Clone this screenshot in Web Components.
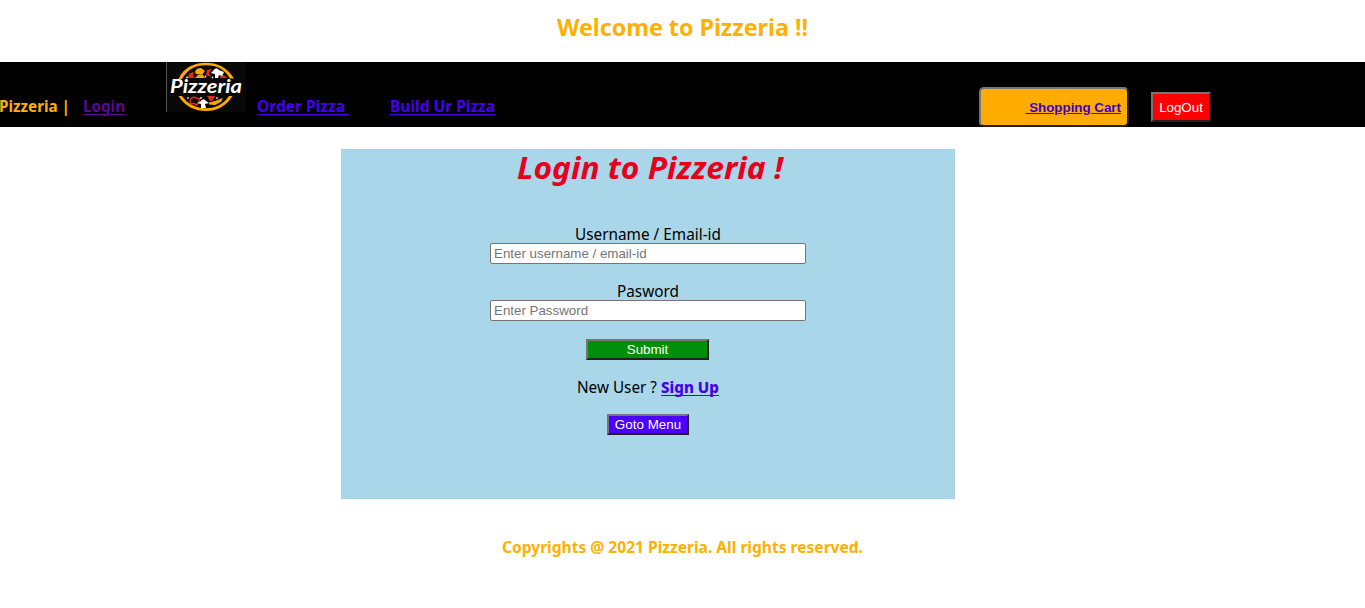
<!DOCTYPE html>
<html lang="en"><head><meta charset="utf-8"><title>Pizzeria</title>
<style>html,body{margin:0;background:#fff;overflow:hidden}body{font-family:"Noto Sans",sans-serif}</style></head>
<body><pizza-app></pizza-app>
<script>
const define=(name,html,ready)=>customElements.define(name,class extends HTMLElement{
  constructor(){super();this.attachShadow({mode:'open'}).innerHTML=html}
  connectedCallback(){if(ready)ready(this)}
});

// Text condensed or expanded to the width given in its "w" attribute.
define('fit-text',`<style>
:host{display:block;flex:none;white-space:pre;font-size:15.5px;line-height:18px}
span{display:inline-block;vertical-align:top;transform-origin:0 0;text-decoration:inherit;text-underline-offset:2px;text-decoration-skip-ink:none}
</style><span><slot></slot></span>`,el=>{
  const w=+el.getAttribute('w'),s=el.shadowRoot.querySelector('span');
  el.style.width=w+'px';
  s.style.transform='scaleX('+w/s.getBoundingClientRect().width+')';
});

define('pizza-logo',`<style>:host{display:block;flex:none;width:80px;height:50px}svg{display:block}</style>
<svg width="80" height="50" viewBox="0 0 80 50">
<rect width="80" height="50" fill="#080808"/><path d="M.5 0V50" stroke="#555"/>
<g fill="#ffa800">
<path d="M12.500 17C18 5 29 .8 40 .8S61 5 68 16.500H64C59 7.500 51 3.200 40 3.200S22 7 16 17z"/>
<path d="M12.500 34C19 44.500 29 49 40 49S60 44.500 66.500 34H63C57 42.500 50 46.200 40 46.200S22 42.500 16 34z"/>
<path d="M29 10q1-4 6-4l4 3-3 4-6-1zM29 16l3-3 5 0 2 3zM49 39l8-3-2 4-6 3-6-.5 0-2z"/></g>
<g fill="#e52b12"><path d="M24 11l4-1-1 4 2 2h-7l0-2zM41 8l5-1-3 4 2 4-5-2zM55 12l4 2 2 2h-7zM41 34h8l-3 5-2 0z"/></g>
<path d="M25 36.500l3-1.500 3 1.500 3 0-1 3-2 3.500-3-1.500-3 .5-1-3z" fill="none" stroke="#e52b12" stroke-width="1.500"/>
<path d="M47 9q3-5 6-1l5 2-2 4-3-1-1 3-3 0 0-4-4-1zM34 40q3-5 6-1l3 2-4 1 1 4-5 0 0-4-4-1z" fill="#fff"/>
<g fill="#ddd"><circle cx="21" cy="15.500" r="1"/><circle cx="39.500" cy="14.500" r="1"/><circle cx="46.500" cy="15.500" r=".9"/><circle cx="35" cy="36" r="1"/><circle cx="22" cy="36" r=".9"/><circle cx="51" cy="36" r=".9"/></g>
<text x="4" y="31" textLength="72" lengthAdjust="spacingAndGlyphs" font-family="Lato,sans-serif" font-size="18" font-weight="700" font-style="italic" fill="#fff">Pizzeria</text>
</svg>`);

define('app-button',`<style>
:host{display:block;flex:none}
button{box-sizing:border-box;display:block;width:100%;height:100%;margin:0;padding:0;border:2px solid;border-color:#767676 #212121 #212121 #767676;border-radius:var(--radius,0);background:var(--bg);color:#fff;font:13.333px/15px "Liberation Sans",Arial,sans-serif;letter-spacing:var(--ls,0);white-space:pre}
</style><button type="button"><slot></slot></button>`);

define('form-field',`<style>
:host{display:flex;flex-direction:column;align-items:center;height:40px}
::slotted(fit-text){padding-top:1px}
input{box-sizing:border-box;width:316px;height:21px;margin:0;padding:1px 3px;border:1px solid #767676;border-radius:2px;background:#fff;font:13.333px "Liberation Sans",Arial,sans-serif}
input::placeholder{color:#757575}
</style><slot></slot><input>`,el=>{
  const i=el.shadowRoot.querySelector('input');i.type=el.getAttribute('type');i.placeholder=el.getAttribute('placeholder');
});

define('site-nav',`<style>
:host{display:flex;align-items:flex-start;height:65px;background:#000;font-weight:700}
.t{margin-top:35px}.brand{color:#ffb000;margin-left:-1px}.link{color:#4700ed;text-decoration:underline 1px}
.login{color:#5b0894;margin-left:13px}pizza-logo{margin-left:41px}.order{margin-left:11px}.build{margin-left:41px}
.cart{width:150px;height:40px;margin:25px 0 0 484px;--bg:#ffab00;--radius:5px}
.cart span{display:block;font-weight:700;text-align:right;padding:0 6px 0 0}
.cart u{color:#3d00cc}.out{width:60px;height:30px;margin:30px 0 0 22px;--bg:#f00}
</style>
<fit-text w="71" class="t brand">Pizzeria |</fit-text>
<fit-text w="42" class="t link login">Login</fit-text>
<pizza-logo></pizza-logo>
<fit-text w="92" class="t link order">Order Pizza </fit-text>
<fit-text w="105" class="t link build">Build Ur Pizza</fit-text>
<app-button class="cart"><span><u> Shopping Cart</u></span></app-button>
<app-button class="out">LogOut</app-button>`);

define('login-card',`<style>
:host{box-sizing:border-box;display:flex;flex-direction:column;align-items:center;width:614px;height:350px;margin:22px 0 0 341px;background:#a9d6e9;color:#000}
.title{font-size:31px;line-height:36px;font-weight:700;font-style:italic;color:#e6001c;margin:0 0 39px 3px}
.pass{margin-top:17px}.submit{width:123px;height:21px;margin:18px 1px 0 0;--bg:#008f0a}
.new{display:flex;gap:4px;margin:18px 0}.sign{font-weight:800;color:#4700ed;text-decoration:underline 1px}
.menu{width:82px;height:21px;--bg:#4b00ff;--ls:.05px}
</style>
<fit-text w="266" class="title">Login to Pizzeria !</fit-text>
<form-field type="text" placeholder="Enter username / email-id"><fit-text w="146">Username / Email-id</fit-text></form-field>
<form-field class="pass" type="password" placeholder="Enter Password"><fit-text w="62">Pasword</fit-text></form-field>
<app-button class="submit">Submit</app-button>
<div class="new"><fit-text w="80">New User ?</fit-text><fit-text w="58" class="sign">Sign Up</fit-text></div>
<app-button class="menu">Goto Menu</app-button>`);

define('pizza-app',`<style>
:host{display:block;width:1365px;height:608px}
header{display:flex;justify-content:center;height:62px;color:#ffb000}
.welcome{font-size:23.300px;line-height:28px;font-weight:700;margin-top:13px}
footer{display:flex;justify-content:center;margin-top:39px;color:#ffb000;font-weight:700}
</style>
<header><fit-text w="251" class="welcome">Welcome to Pizzeria !!</fit-text></header>
<site-nav></site-nav><login-card></login-card>
<footer><fit-text w="361">Copyrights @ 2021 Pizzeria. All rights reserved.</fit-text></footer>`);
</script></body></html>
